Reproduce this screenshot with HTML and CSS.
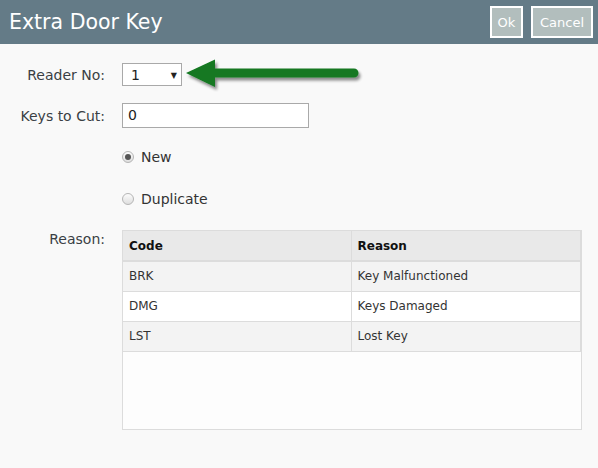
FILE: index.html
```html
<!DOCTYPE html>
<html>
<head>
<meta charset="utf-8">
<link rel="stylesheet" href="styles.css">
</head>
<body>
<header class="bar">
  <h1 class="title">Extra Door Key</h1>
  <div class="actions">
    <button class="btn btn-ok">Ok</button>
    <button class="btn btn-cancel">Cancel</button>
  </div>
</header>
<main class="form">
  <div class="row row-reader">
    <label class="label">Reader No:</label>
    <div class="field">
      <div class="select"><span>1</span><span class="caret">&#9660;</span></div>
      <svg class="arrow" width="180" height="40" viewBox="0 0 180 40">
        <defs>
          <filter id="sh" x="-10%" y="-30%" width="130%" height="180%">
            <feGaussianBlur in="SourceAlpha" stdDeviation="1.6"/>
            <feOffset dx="2" dy="3"/>
            <feComponentTransfer><feFuncA type="linear" slope="0.45"/></feComponentTransfer>
            <feMerge><feMergeNode/><feMergeNode in="SourceGraphic"/></feMerge>
          </filter>
        </defs>
        <g filter="url(#sh)" fill="#137820">
          <path d="M1 16 L30 2.5 L30 30 Z"/>
          <path d="M28 11.5 H169 a4.5 4.5 0 0 1 0 9 H28 Z"/>
        </g>
      </svg>
    </div>
  </div>
  <div class="row row-keys">
    <label class="label">Keys to Cut:</label>
    <div class="field"><div class="input">0</div></div>
  </div>
  <div class="row row-radio row-new">
    <span class="label"></span>
    <div class="field radio"><span class="dot checked"></span>New</div>
  </div>
  <div class="row row-radio row-dup">
    <span class="label"></span>
    <div class="field radio"><span class="dot"></span>Duplicate</div>
  </div>
  <div class="row row-table">
    <label class="label label-top">Reason:</label>
    <div class="grid">
      <table class="tbl">
        <thead><tr><th>Code</th><th>Reason</th></tr></thead>
        <tbody>
          <tr class="alt"><td>BRK</td><td>Key Malfunctioned</td></tr>
          <tr><td>DMG</td><td>Keys Damaged</td></tr>
          <tr class="alt"><td>LST</td><td>Lost Key</td></tr>
        </tbody>
      </table>
    </div>
  </div>
</main>
</body>
</html>
```
FILE: styles.css
```css
* { box-sizing: border-box; }
html, body { margin: 0; padding: 0; }
body {
  background: #f9f9f9;
  font-family: "DejaVu Sans", Verdana, sans-serif;
  font-size: 14px;
  color: #333;
  width: 598px;
  height: 468px;
  overflow: hidden;
}
.bar {
  height: 44px;
  background: #647b87;
  display: flex;
  align-items: center;
  justify-content: space-between;
  padding: 0 5px 0 9px;
}
.title {
  margin: 0;
  font-weight: normal;
  font-size: 20.5px;
  color: #fff;
}
.actions { display: flex; gap: 8px; }
.btn {
  height: 32px;
  background: #b2bebd;
  border: 2px solid #fff;
  color: #fff;
  font-family: "DejaVu Sans", Verdana, sans-serif;
  font-size: 13px;
  padding: 0;
  margin: 0;
  text-align: center;
}
.btn-ok { width: 33px; }
.btn-cancel { width: 62px; }
.form { padding-top: 19px; }
.row {
  display: flex;
  align-items: center;
  gap: 17px;
}
.row-reader { height: 23px; margin-bottom: 17px; }
.row-keys { height: 25px; margin-bottom: 20px; }
.row-radio { height: 17px; }
.row-new { margin-bottom: 25px; }
.row-dup { margin-bottom: 23px; }
.label {
  width: 105px;
  text-align: right;
  flex: none;
  color: #3a3f44;
}
.field { display: flex; align-items: center; }
.select {
  width: 60px;
  height: 23px;
  border: 1px solid #a9a9a9;
  background: #fff;
  display: flex;
  justify-content: space-between;
  align-items: center;
  padding: 1px 4px 0 8px;
  color: #222;
}
.caret { font-size: 8px; color: #222; }
.arrow { margin: -7px 0 -11px 3px; }
.input {
  width: 187px;
  height: 25px;
  border: 1px solid #a9a9a9;
  background: #fff;
  padding: 3px 5px;
  color: #222;
}
.radio { gap: 7px; color: #333; }
.dot {
  width: 12px;
  height: 12px;
  border-radius: 50%;
  border: 1px solid #b5b5b5;
  background: linear-gradient(#fcfcfc, #dedede);
  position: relative;
}
.dot.checked::after {
  content: "";
  position: absolute;
  left: 2px; top: 2px;
  width: 6px; height: 6px;
  border-radius: 50%;
  background: #555;
}
.row-table { align-items: flex-start; }
.label-top { padding-top: 1px; }
.grid {
  width: 460px;
  height: 200px;
  border: 1px solid #dcdcdc;
  background: #fdfdfd;
}
.tbl {
  width: 458px;
  border-collapse: collapse;
  font-size: 12px;
}
.tbl th, .tbl td {
  height: 30px;
  padding: 0 6px;
  text-align: left;
  border: 1px solid #dcdcdc;
  border-top: none;
}
.tbl tr > :first-child { border-left: none; width: 228px; }
.tbl th {
  background: #e9e9e9;
  color: #111;
  font-weight: bold;
  border-bottom: 2px solid #dcdcdc;
}
.tbl td { background: #fff; color: #333; }
.tbl tr.alt td { background: #f3f3f3; }
```
